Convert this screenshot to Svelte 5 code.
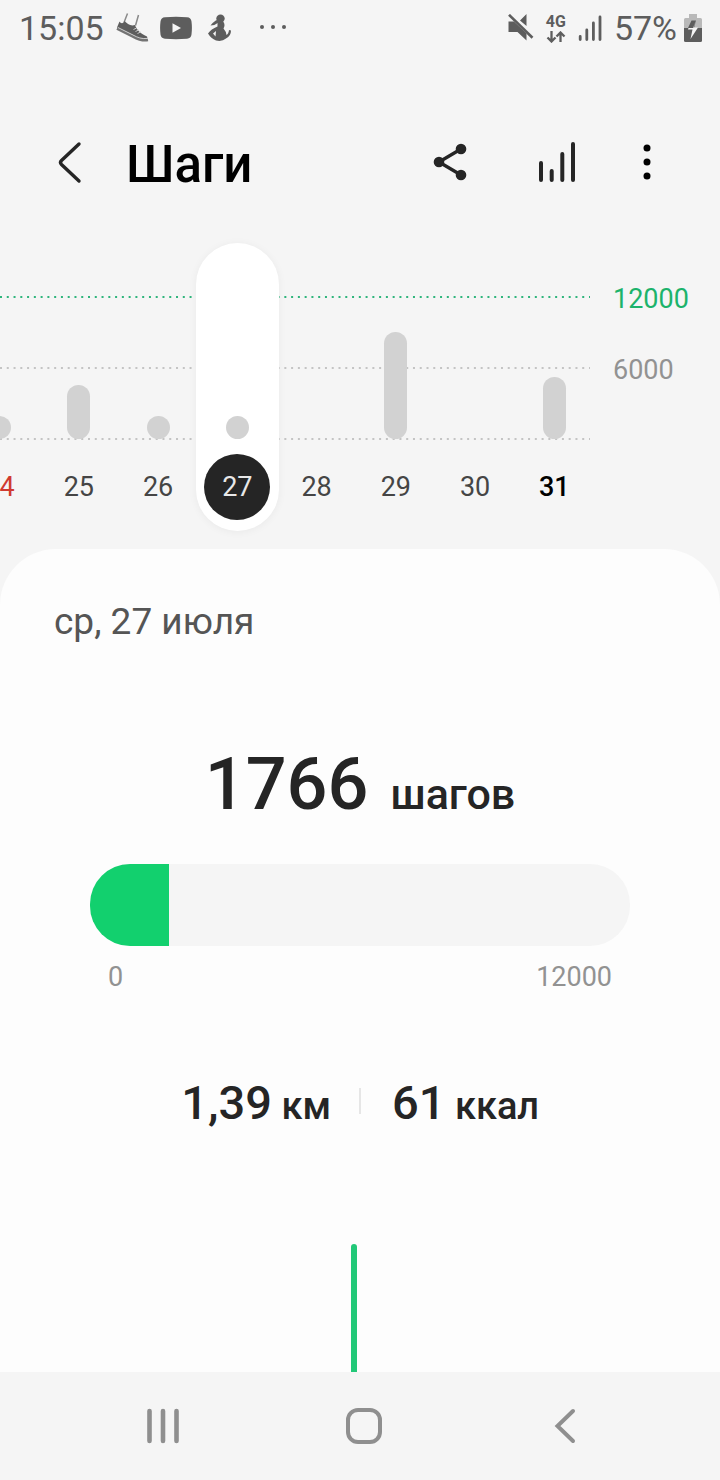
<script>
  const goal = 12000;
  const steps = 1766;
  const plotHeight = 142;
  const minBar = 23;

  const days = [
    { day: 24, steps: 1200, holiday: true },
    { day: 25, steps: 4560 },
    { day: 26, steps: 1500 },
    { day: 27, steps: 1766, selected: true },
    { day: 28, steps: 0 },
    { day: 29, steps: 9040 },
    { day: 30, steps: 0 },
    { day: 31, steps: 5240, today: true }
  ];

  const barHeight = (n) => Math.max(minBar, Math.round((n / goal) * plotHeight));
</script>

<div class="screen">
  <div class="status">
    <div class="group left">
      <span class="clock">15:05</span>
      <svg width="34" height="30" viewBox="0 0 34 30" aria-hidden="true">
        <path d="M12.500 .5L9 9.500M23.500 2L20.500 12.500" fill="none" stroke="#8a8a8a" stroke-width="1.500" />
        <path d="M4.500 8.500C6 11 8.500 10.500 9.500 8C12 10.500 15.500 13.500 20 12C21.500 16.500 25 20.500 32 23.500L32.500 25.500C27 26.500 22 24.500 18 22L2 14.500Z" fill="#5d5d5d" />
        <path d="M2 15.500L18 23.500C22.500 26 27 28 33 27" fill="none" stroke="#737373" stroke-width="2.600" />
        <path d="M3 14.500L18 22C22.500 24.500 27 26.200 32.500 25.400" fill="none" stroke="#e0e0e0" stroke-width=".8" />
        <path d="M18.500 16.500l3-1.500M20.500 18.500l3-1.500M22.500 20.500l3-1.500" stroke="#c8c8c8" stroke-width="1" />
      </svg>
      <svg width="32" height="24" viewBox="0 0 32 24" aria-hidden="true">
        <path d="M5 1.300Q16 .3 27 1.300Q31 1.500 31.500 5.500Q32.300 12 31.500 18.500Q31 22.300 27 22.700Q16 23.600 5 22.700Q1 22.300 .5 18.500Q-.3 12 .5 5.500Q1 1.500 5 1.300Z" fill="#5d5d5d" />
        <path d="M12.500 7.200V16.800L21 12Z" fill="#f5f5f5" />
      </svg>
      <svg width="28" height="28" viewBox="-5 0 28 28" aria-hidden="true">
        <circle cx="12.500" cy="4.600" r="4.200" fill="#5d5d5d" />
        <path d="M9.500 6Q7 6 2.500 11.500Q7 11.500 10.500 8.500Z" fill="#5d5d5d" />
        <path d="M9.500 8L15.500 8Q17.500 11 15.500 14.500Q18.500 18 18.500 21Q20.500 20 21 16L23 16.500Q23 22 18 24.500Q14 28 8 26.500Q3 24.500 0 19.500Q3 15 9.500 12.500Z" fill="#5d5d5d" />
        <path d="M5 19.500L8 17L7.500 22.500Z" fill="#f5f5f5" />
      </svg>
      <svg class="more" width="28" height="6" viewBox="0 0 28 6" aria-hidden="true">
        <g fill="#5d5d5d"><circle cx="4" cy="2" r="2" /><circle cx="15" cy="2" r="2" /><circle cx="26" cy="2" r="2" /></g>
      </svg>
    </div>
    <div class="group right">
      <svg width="26" height="28" viewBox="0 0 26 28" aria-hidden="true">
        <path d="M.5 7.500H6L18.500 19.500V26.500L9.500 18H.5ZM12 6.500L18.500 0V12Z" fill="#5d5d5d" />
        <path d="M1 .8L24.500 23.800" stroke="#5d5d5d" stroke-width="2.600" />
      </svg>
      <div class="net">
        <span>4G</span>
        <svg width="20" height="12" viewBox="0 0 20 12" aria-hidden="true">
          <path d="M5.500 0V10M1.500 6.500L5.500 10.500L9.500 6.500M14.500 11V1.500M10.500 5.500L14.500 1.500L18.500 5.500" fill="none" stroke="#5d5d5d" stroke-width="2.300" />
        </svg>
      </div>
      <svg width="24" height="28" viewBox="0 0 24 28" aria-hidden="true">
        <path d="M2.200 22.500V25.500M8.800 16V25.500M15.400 9V25.500M22 3V25.500" stroke="#5d5d5d" stroke-width="2.800" stroke-linecap="round" />
      </svg>
      <span class="percent">57%</span>
      <svg width="18" height="28" viewBox="0 0 18 28" aria-hidden="true">
        <path d="M5 0H13V4H16.500Q18 4 18 5.500V15H0V5.500Q0 4 1.500 4H5Z" fill="#b9b9b9" />
        <path d="M0 14H18V26.500Q18 28 16.500 28H1.500Q0 28 0 26.500Z" fill="#5d5d5d" />
        <path d="M7.500 6.500H12L10 14H4Z" fill="#5d5d5d" />
        <path d="M4 15.500H8.500L6.500 25L14 13.500H9.500L12 6.500L9 14H4.500Z" fill="#f5f5f5" />
      </svg>
    </div>
  </div>

  <header>
    <button class="icon" aria-label="Назад">
      <svg width="54" height="54" viewBox="0 0 54 54">
        <path d="M36 8L18.500 24.500Q16.500 26.500 18.500 28.500L36 45" fill="none" stroke="#252525" stroke-width="3.400" stroke-linecap="round" />
      </svg>
    </button>
    <h1>Шаги</h1>
    <div class="actions">
      <button class="icon" aria-label="Поделиться">
        <svg width="54" height="54" viewBox="0 0 54 54">
          <path d="M38 13L16 26L38 39" fill="none" stroke="#252525" stroke-width="3.400" />
          <g fill="#252525"><circle cx="38" cy="13" r="5.300" /><circle cx="16" cy="26" r="5.300" /><circle cx="38" cy="39" r="5.300" /></g>
        </svg>
      </button>
      <button class="icon" aria-label="Статистика">
        <svg width="54" height="54" viewBox="0 0 54 54">
          <path d="M11 27V44M21.700 35V44M32.300 18V44M43 8V44" stroke="#252525" stroke-width="4" stroke-linecap="round" />
        </svg>
      </button>
      <button class="icon narrow" aria-label="Ещё">
        <svg width="20" height="54" viewBox="0 0 20 54">
          <circle cx="10" cy="12" r="3.500" /><circle cx="10" cy="26" r="3.500" /><circle cx="10" cy="40" r="3.500" />
        </svg>
      </button>
    </div>
  </header>

  <section class="chart">
    <div class="plot">
      <svg class="lines" width="100%" height="200" aria-hidden="true">
        <line x1="0" x2="100%" y1="54" y2="54" stroke="#2fb57c" stroke-width="2" />
        <line x1="0" x2="100%" y1="125" y2="125" stroke="#c4c4c4" stroke-width="2" />
        <line x1="0" x2="100%" y1="196" y2="196" stroke="#c4c4c4" stroke-width="2" />
      </svg>
      <div class="days">
        {#each days as d}
          <button class="day" class:selected={d.selected} class:holiday={d.holiday} class:today={d.today}>
            <span class="track">
              {#if d.steps}<span class="bar" style:height="{barHeight(d.steps)}px"></span>{/if}
            </span>
            <span class="num">{d.day}</span>
          </button>
        {/each}
      </div>
    </div>
    <div class="axis">
      <span class="goal">12000</span>
      <span>6000</span>
    </div>
  </section>

  <main>
    <p class="date">ср, 27 июля</p>
    <p class="total"><strong>{steps}</strong><span>шагов</span></p>
    <div class="progress" role="progressbar" aria-label="Шаги" aria-valuenow={steps} aria-valuemin="0" aria-valuemax={goal}>
      <div class="fill" style:width="{(steps / goal) * 100}%"></div>
    </div>
    <div class="range"><span>0</span><span>{goal}</span></div>
    <div class="stats">
      <p><strong>1,39</strong> км</p>
      <i></i>
      <p><strong>61</strong> ккал</p>
    </div>
    <div class="hours"><div class="hour"></div></div>
  </main>

  <nav>
    <button aria-label="Недавние">
      <svg width="40" height="40" viewBox="0 0 40 40">
        <path d="M6.500 5V35M20 5V35M33.500 5V35" stroke="#8f8f8f" stroke-width="4.600" stroke-linecap="round" />
      </svg>
    </button>
    <button aria-label="Главный экран">
      <svg width="40" height="40" viewBox="0 0 40 40">
        <rect x="4" y="4" width="32" height="32" rx="10" fill="none" stroke="#8f8f8f" stroke-width="4" />
      </svg>
    </button>
    <button aria-label="Назад">
      <svg width="40" height="40" viewBox="0 0 40 40">
        <path d="M28 5L12.500 20L28 35" fill="none" stroke="#8f8f8f" stroke-width="4" stroke-linecap="round" />
      </svg>
    </button>
  </nav>
</div>

<style>
  :global(body) {
    margin: 0;
    background: #f5f5f5;
  }

  .screen {
    display: flex;
    flex-direction: column;
    min-height: 100vh;
    overflow-x: clip;
    background: #f5f5f5;
    color: #252525;
    font-family: Roboto, "Noto Sans", sans-serif;
  }

  svg {
    display: block;
    flex: none;
  }

  p,
  h1 {
    margin: 0;
  }

  button {
    padding: 0;
    border: 0;
    background: none;
    font: inherit;
    color: inherit;
    cursor: pointer;
  }

  .status {
    display: flex;
    justify-content: space-between;
    align-items: center;
    height: 56px;
    padding: 0 18px 0 19px;
    color: #5d5d5d;
    font-size: 34px;
    line-height: 40px;
  }

  .group {
    display: flex;
    align-items: center;
  }

  .left {
    gap: 11px;
  }

  .more {
    margin-left: 16px;
  }

  .right {
    gap: 12px;
  }

  .percent {
    margin-right: -5px;
  }

  .net {
    display: flex;
    flex-direction: column;
    font-size: 16px;
    font-weight: 700;
    line-height: 16px;
    gap: 1px;
  }

  header {
    display: flex;
    align-items: center;
    height: 54px;
    margin-top: 80px;
    padding: 0 63px 0 43px;
  }

  h1 {
    flex: 1;
    margin-left: 29px;
    padding-top: 3px;
    color: #000;
    font-size: 51px;
    font-weight: 500;
    line-height: 54px;
  }

  .actions {
    display: flex;
    gap: 53px;
  }

  .chart {
    display: flex;
    margin-top: 53px;
  }

  .plot {
    display: grid;
    flex: 1;
    min-width: 0;
  }

  .plot > * {
    grid-area: 1 / 1;
  }

  .lines {
    width: calc(100% - 4px);
  }

  .lines line {
    stroke-dasharray: 2 4.77;
  }

  .days {
    display: grid;
    grid-template-columns: repeat(8, 1fr);
    margin-left: -40px;
  }

  .day {
    display: flex;
    flex-direction: column;
    align-items: center;
    gap: 15px;
    margin: 0 -2px;
    padding-bottom: 11px;
    border-radius: 42px;
    color: #454545;
    font-size: 27px;
    line-height: 66px;
  }

  .track {
    display: flex;
    align-items: flex-end;
    height: 196px;
  }

  .bar {
    width: 23px;
    border-radius: 12px;
    background: #d2d2d2;
  }

  .num {
    width: 66px;
    border-radius: 50%;
  }

  .holiday {
    color: #d03a30;
  }

  .today {
    color: #000;
    font-weight: 500;
  }

  .selected {
    background: #fff;
    box-shadow: 0 1px 8px rgba(0, 0, 0, 0.05);
    color: #e8e8e8;
  }

  .selected .num {
    background: #252525;
  }

  .axis {
    display: flex;
    flex-direction: column;
    gap: 39px;
    width: 107px;
    padding: 40px 0 0 19px;
    color: #929292;
    font-size: 27px;
    line-height: 32px;
  }

  .goal {
    color: #1cb36b;
  }

  main {
    display: flex;
    flex: 1;
    flex-direction: column;
    margin-top: 18px;
    padding-top: 49px;
    border-radius: 56px 56px 0 0;
    background: #fdfdfd;
  }

  .date {
    padding: 0 54px;
    color: #555;
    font-size: 37px;
    line-height: 48px;
  }

  .total {
    display: flex;
    justify-content: center;
    align-items: baseline;
    gap: 22px;
    margin-top: 97px;
    font-size: 43px;
    font-weight: 500;
    line-height: 84px;
  }

  .total strong {
    font-size: 72px;
    font-weight: 500;
  }

  .progress {
    height: 82px;
    margin: 28px 90px 0;
    overflow: hidden;
    border-radius: 40px;
    background: #f5f5f5;
  }

  .fill {
    height: 100%;
    background: #12d06e;
  }

  .range {
    display: flex;
    justify-content: space-between;
    margin: 15px 108px 0;
    color: #929292;
    font-size: 27px;
    line-height: 32px;
  }

  .stats {
    display: grid;
    grid-template-columns: 1fr 2px 1fr;
    align-items: start;
    gap: 28px;
    margin-top: 82px;
    font-size: 38px;
    font-weight: 500;
    line-height: 56px;
  }

  .stats p:first-child {
    text-align: right;
  }

  .stats p:last-child {
    padding-left: 3px;
  }

  .stats strong {
    font-size: 47px;
    font-weight: 500;
  }

  .stats i {
    height: 26px;
    margin-top: 13px;
    background: #e6e6e6;
  }

  .hours {
    display: flex;
    flex: 1;
    justify-content: center;
    min-height: 128px;
    margin-top: 110px;
    padding-right: 12px;
  }

  .hour {
    width: 6px;
    border-radius: 3px 3px 0 0;
    background: #22c878;
  }

  nav {
    display: grid;
    grid-template-columns: repeat(3, 1fr);
    height: 108px;
    padding: 0 54px 0 62px;
  }

  nav button {
    display: grid;
    place-items: center;
  }
</style>
